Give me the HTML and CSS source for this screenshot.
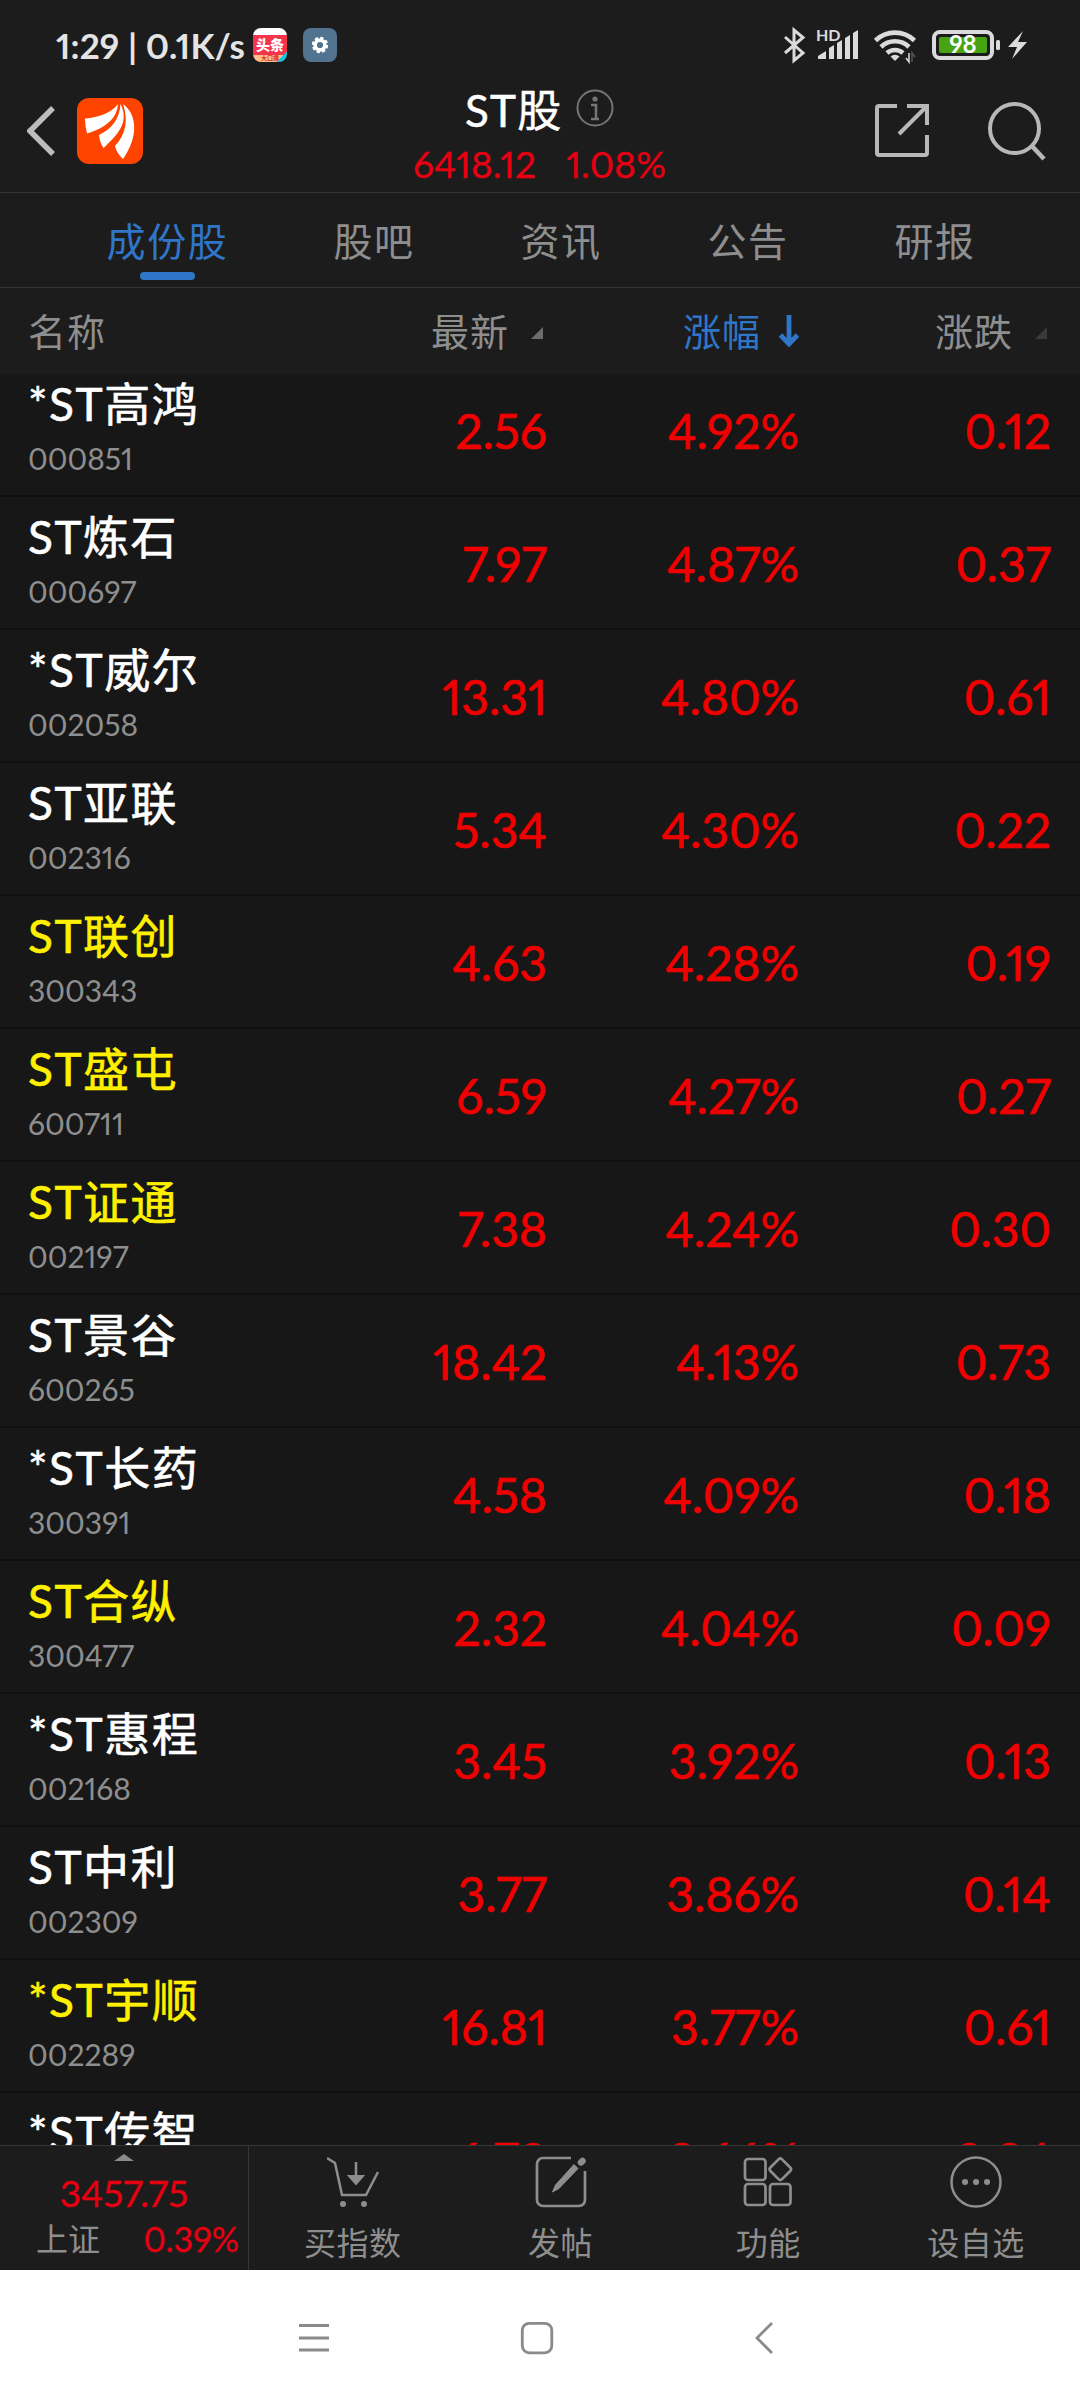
FILE: index.html
```html
<!DOCTYPE html>
<html lang="zh-CN">

<head>
    <meta charset="UTF-8">
    <meta name="viewport" content="width=device-width, initial-scale=1.0">
    <title>ST股</title>
    <link rel="stylesheet" href="styles.css">
</head>

<body>
    <div class="status-bar">
        <span class="status-time">1:29 | 0.1K/s</span>
        <div class="app-badge news">
            <span class="news-title">头条</span>
            <span class="news-foot">大口播</span>
        </div>
        <div class="app-badge gear">
            <svg width="34" height="34" viewBox="0 0 34 34">
                <circle cx="17" cy="17" r="4.9" fill="none" stroke="#fff" stroke-width="3.6"/>
                <circle cx="17" cy="17" r="7" fill="none" stroke="#fff" stroke-width="2.4" stroke-dasharray="3.3 2.2"/>
            </svg>
        </div>
        <svg class="status-icons" width="250" height="40" viewBox="780 25 250 40">
            <path d="M785 37l18 16-9 7.500V30l9 7.500-18 15.500" fill="none" stroke="#dcdadc" stroke-width="3"/>
            <text x="816" y="40.500" class="hd-text">HD</text>
            <path d="M818 59v-3l8-5v8zM829 59V48l5-3v14zM837 59V43l5-3v19zM845 59V38l5-3v24zM853 59V33l5-3v29z" fill="#dcdadc"/>
            <g fill="none" stroke="#dcdadc" stroke-width="4.600">
                <path d="M875.500 40.500a28 28 0 0 1 39 0"/>
                <path d="M881 47a20 20 0 0 1 28 0"/>
                <path d="M887 53a12 12 0 0 1 16 0"/>
            </g>
            <path d="M890.500 56.500a7 7 0 0 1 9 0l-4.500 4.500z" fill="#dcdadc"/>
            <path d="M909 53v9l-3-4" fill="none" stroke="#dcdadc" stroke-width="1.500"/>
            <path d="M912 62v-9l3 4" fill="none" stroke="#555" stroke-width="1.500"/>
            <rect x="934" y="32" width="58" height="26" rx="6" fill="none" stroke="#dcdadc" stroke-width="4"/>
            <rect x="939" y="37" width="48" height="16" rx="2" fill="#46a412"/>
            <text x="963" y="53" class="battery-text">98</text>
            <rect x="996" y="40" width="4" height="10" rx="1.500" fill="#dcdadc"/>
            <path d="M1023 31l-15 16h9l-5 12 15-17h-9z" fill="#dcdadc"/>
        </svg>
    </div>

    <div class="header">
        <svg class="back" width="30" height="52" viewBox="0 0 30 52">
            <path d="M26 3L3 26l23 23" fill="none" stroke="#bdbdbd" stroke-width="5.500"/>
        </svg>
        <svg class="logo" width="66" height="66" viewBox="0 0 66 66">
            <rect width="66" height="66" rx="12" fill="#ff4400"/>
            <path d="M8 20.500C22 19.500 34 15 41 6c-1 15-13 24-31 29.500q-2-7-2-15z" fill="#fff"/>
            <path d="M22 37C34 31 42.500 22 43.500 6c9 18-2 30-17 44q-4-6-4.500-13z" fill="#fff"/>
            <path d="M38 48C49 36 51.500 22 46 6c15 11 15 34 0 55q-6-5-8-13z" fill="#fff"/>
        </svg>
        <div class="header-center">
            <div class="title">
                <span>ST股</span>
                <svg width="38" height="38" viewBox="0 0 38 38">
                    <circle cx="19" cy="19" r="17.500" fill="none" stroke="#757575" stroke-width="2"/>
                    <circle cx="19" cy="10" r="2.600" fill="#757575"/>
                    <path d="M15 16h5v13M15 30h8" fill="none" stroke="#757575" stroke-width="2.500"/>
                </svg>
            </div>
            <div class="index-line"><span>6418.12</span><span>1.08%</span></div>
        </div>
        <svg class="share" width="56" height="56" viewBox="0 0 56 56">
            <path d="M23 4H5a2 2 0 0 0-2 2v45a2 2 0 0 0 2 2h46a2 2 0 0 0 2-2V33M33 4h20v19M53 4L25 32" fill="none" stroke="#b8b8b8" stroke-width="4"/>
        </svg>
        <svg class="search" width="60" height="60" viewBox="0 0 60 60">
            <circle cx="27.500" cy="27.500" r="24.500" fill="none" stroke="#b8b8b8" stroke-width="4"/>
            <path d="M44 44l13 14" stroke="#b8b8b8" stroke-width="4.500"/>
        </svg>
    </div>

    <div class="tabs">
        <div class="tab active">成份股</div>
        <div class="tab">股吧</div>
        <div class="tab">资讯</div>
        <div class="tab">公告</div>
        <div class="tab">研报</div>
    </div>

    <div class="table-head">
        <div class="head-name">名称</div>
        <div class="head-col">最新<svg class="corner" width="12" height="12" viewBox="0 0 12 12"><path d="M12 0v12H0z" fill="#6d6d6d"/></svg></div>
        <div class="head-col sorted">涨幅<svg class="arrow" width="20" height="32" viewBox="0 0 20 32"><path d="M10 0v29M1.500 20L10 29l8.500-9" fill="none" stroke="#2f76c9" stroke-width="4.800"/></svg></div>
        <div class="head-col">涨跌<svg class="corner" width="12" height="12" viewBox="0 0 12 12"><path d="M12 0v12H0z" fill="#3a3a3a"/></svg></div>
    </div>

    <div class="list">
        <div class="row">
            <div class="stock"><div class="name">*ST高鸿</div><div class="code">000851</div></div>
            <div class="num">2.56</div><div class="num">4.92%</div><div class="num">0.12</div>
        </div>
        <div class="row">
            <div class="stock"><div class="name">ST炼石</div><div class="code">000697</div></div>
            <div class="num">7.97</div><div class="num">4.87%</div><div class="num">0.37</div>
        </div>
        <div class="row">
            <div class="stock"><div class="name">*ST威尔</div><div class="code">002058</div></div>
            <div class="num">13.31</div><div class="num">4.80%</div><div class="num">0.61</div>
        </div>
        <div class="row">
            <div class="stock"><div class="name">ST亚联</div><div class="code">002316</div></div>
            <div class="num">5.34</div><div class="num">4.30%</div><div class="num">0.22</div>
        </div>
        <div class="row">
            <div class="stock"><div class="name own">ST联创</div><div class="code">300343</div></div>
            <div class="num">4.63</div><div class="num">4.28%</div><div class="num">0.19</div>
        </div>
        <div class="row">
            <div class="stock"><div class="name own">ST盛屯</div><div class="code">600711</div></div>
            <div class="num">6.59</div><div class="num">4.27%</div><div class="num">0.27</div>
        </div>
        <div class="row">
            <div class="stock"><div class="name own">ST证通</div><div class="code">002197</div></div>
            <div class="num">7.38</div><div class="num">4.24%</div><div class="num">0.30</div>
        </div>
        <div class="row">
            <div class="stock"><div class="name">ST景谷</div><div class="code">600265</div></div>
            <div class="num">18.42</div><div class="num">4.13%</div><div class="num">0.73</div>
        </div>
        <div class="row">
            <div class="stock"><div class="name">*ST长药</div><div class="code">300391</div></div>
            <div class="num">4.58</div><div class="num">4.09%</div><div class="num">0.18</div>
        </div>
        <div class="row">
            <div class="stock"><div class="name own">ST合纵</div><div class="code">300477</div></div>
            <div class="num">2.32</div><div class="num">4.04%</div><div class="num">0.09</div>
        </div>
        <div class="row">
            <div class="stock"><div class="name">*ST惠程</div><div class="code">002168</div></div>
            <div class="num">3.45</div><div class="num">3.92%</div><div class="num">0.13</div>
        </div>
        <div class="row">
            <div class="stock"><div class="name">ST中利</div><div class="code">002309</div></div>
            <div class="num">3.77</div><div class="num">3.86%</div><div class="num">0.14</div>
        </div>
        <div class="row">
            <div class="stock"><div class="name own">*ST宇顺</div><div class="code">002289</div></div>
            <div class="num">16.81</div><div class="num">3.77%</div><div class="num">0.61</div>
        </div>
        <div class="row">
            <div class="stock"><div class="name">*ST传智</div></div>
            <div class="num">6.78</div><div class="num">3.66%</div><div class="num">0.24</div>
        </div>
    </div>

    <div class="bottom-bar">
        <div class="market">
            <svg width="20" height="7" viewBox="0 0 20 7"><path d="M10 0l10 7H0z" fill="#8a8a8a"/></svg>
            <div class="market-value">3457.75</div>
            <div class="market-line"><span class="market-name">上证</span><span>0.39%</span></div>
        </div>
        <div class="action">
            <svg width="52" height="52" viewBox="0 0 52 52" fill="none" stroke="#8e8e8e" stroke-width="2.500">
                <path d="M0 2l8 5 7 32h24l12-23"/>
                <path d="M29 6v16"/>
                <path d="M22 20h14l-7 8zM14 48a2 2 0 1 0 4 0a2 2 0 1 0-4 0M35 48a2 2 0 1 0 4 0a2 2 0 1 0-4 0" fill="#8e8e8e" stroke-width="2"/>
            </svg>
            <span>买指数</span>
        </div>
        <div class="action">
            <svg width="52" height="52" viewBox="0 0 52 52" fill="none" stroke="#8e8e8e" stroke-width="2.700">
                <path d="M36 2H8a6 6 0 0 0-6 6v36a6 6 0 0 0 6 6h36a6 6 0 0 0 6-6V15"/>
                <path d="M39 8.500l4 4-19 20-6.500 3.500 3-7z" fill="#8e8e8e" stroke-width="1"/>
                <path d="M46 6.500l1.500-1.500" stroke-width="6.500" stroke-linecap="round"/>
            </svg>
            <span>发帖</span>
        </div>
        <div class="action">
            <svg width="52" height="52" viewBox="0 0 52 52" fill="none" stroke="#8e8e8e" stroke-width="2.700">
                <rect x="3" y="3" width="20.500" height="21" rx="3"/>
                <rect x="3" y="28" width="20.500" height="21" rx="3"/>
                <rect x="28" y="28" width="20.500" height="21" rx="3"/>
                <rect x="30" y="5" width="16.500" height="16.500" rx="2.500" transform="rotate(45 38.300 13.300)"/>
            </svg>
            <span>功能</span>
        </div>
        <div class="action">
            <svg width="52" height="52" viewBox="0 0 52 52" fill="none" stroke="#8e8e8e" stroke-width="2.500">
                <circle cx="26" cy="26" r="24.500"/>
                <path d="M15 26h.1M26 26h.1M37 26h.1" stroke-width="6" stroke-linecap="round"/>
            </svg>
            <span>设自选</span>
        </div>
    </div>

    <div class="nav-bar">
        <svg width="32" height="34" viewBox="0 0 32 34"><path d="M1 4.500h30M1 17h30M1 29h30" stroke="#8a8a8a" stroke-width="2.800"/></svg>
        <svg class="home" width="34" height="34" viewBox="0 0 34 34"><rect x="2.300" y="2.300" width="29.500" height="29.500" rx="7" fill="none" stroke="#8a8a8a" stroke-width="2.800"/></svg>
        <svg width="20" height="34" viewBox="0 0 20 34"><path d="M18 2L3 17l15 15" fill="none" stroke="#8a8a8a" stroke-width="2.800"/></svg>
    </div>
</body>

</html>
```

FILE: styles.css
```css
* {
    box-sizing: border-box;
}

body {
    margin: 0;
    width: 1080px;
    height: 2400px;
    overflow: hidden;
    display: flex;
    flex-direction: column;
    background-color: #1c1c1c;
    color: #8e8e8e;
    font-family: Lato, "Noto Sans CJK SC", sans-serif;
    font-variant-numeric: proportional-nums;
}

svg {
    display: block;
    flex: none;
}

.status-bar {
    height: 76px;
    padding: 14px 50px 0 56px;
    display: flex;
    align-items: center;
    flex: none;
}

.status-time {
    width: 197px;
    font-size: 35px;
    font-weight: bold;
    letter-spacing: 0.1px;
    color: #e4e4e4;
    white-space: nowrap;
}

.app-badge {
    width: 34px;
    height: 34px;
    border-radius: 8px;
    margin-right: 16px;
    overflow: hidden;
    flex: none;
}

.news {
    background: linear-gradient(135deg, transparent 84%, #19c5dc 84%), linear-gradient(#fff 0 20%, #f5344c 20% 78%, #ffc08a 78%);
    display: flex;
    flex-direction: column;
    align-items: center;
    padding-top: 7px;
}

.news-title {
    font-size: 14px;
    font-weight: 900;
    line-height: 19px;
    color: #fff;
}

.news-foot {
    font-size: 6px;
    font-weight: bold;
    line-height: 7px;
    color: #d8351c;
}

.gear {
    background-color: #52738f;
}

.status-icons {
    margin-left: auto;
}

.hd-text {
    font-size: 16px;
    font-weight: bold;
    fill: #dcdadc;
}

.battery-text {
    font-size: 24px;
    font-weight: bold;
    fill: #fff;
    text-anchor: middle;
}

.header {
    height: 117px;
    border-bottom: 1px solid #333;
    display: flex;
    flex: none;
    padding-left: 27px;
}

.back {
    margin-top: 29px;
}

.logo {
    margin: 22px 0 0 20px;
}

.header-center {
    width: 260px;
    margin: 4px 0 0 267px;
    display: flex;
    flex-direction: column;
}

.title {
    display: flex;
    align-items: center;
    gap: 14px;
    height: 56px;
    padding-left: 55px;
    font-size: 44px;
    letter-spacing: 1.2px;
    -webkit-text-stroke: 0.5px;
    color: #fff;
}

.index-line {
    display: flex;
    justify-content: space-between;
    width: 253px;
    margin: 6px 0 0 3px;
    font-size: 37px;
    line-height: 44px;
    letter-spacing: 0.2px;
    -webkit-text-stroke: 0.3px;
    color: #e60012;
}

.share {
    margin: 26px 0 0 204px;
}

.search {
    margin: 25px 0 0 57px;
}

.tabs {
    height: 95px;
    border-bottom: 1px solid #333;
    display: flex;
    justify-content: center;
    flex: none;
    padding-left: 3px;
}

.tab {
    width: 187px;
    display: flex;
    flex-direction: column;
    align-items: center;
    padding-top: 20px;
    font-size: 39px;
    line-height: 56px;
    letter-spacing: 1.6px;
}

.tab.active {
    width: 226px;
    color: #2f76c9;
}

.tab.active::after {
    content: "";
    width: 55px;
    height: 8px;
    margin-top: 3px;
    border-radius: 4px;
    background-color: #2f76c9;
}

.table-head,
.row {
    display: grid;
    grid-template-columns: 267px 252px 252px 252px;
    padding-left: 28px;
    flex: none;
}

.table-head {
    height: 86px;
    font-size: 38px;
    line-height: 86px;
    letter-spacing: 1px;
}

.head-col {
    display: flex;
    align-items: center;
    justify-content: flex-end;
}

.corner {
    margin: 4px 4px 0 22px;
}

.arrow {
    margin: 0 0 0 18px;
}

.sorted {
    color: #2f76c9;
}

.list {
    flex: 1;
    min-height: 0;
    overflow: hidden;
    background-color: #171717;
    display: flex;
    flex-direction: column;
}

.row {
    height: 133px;
    border-bottom: 2px solid #101010;
}

/* list is scrolled a little, first row is cut at the top */
.row:first-child {
    margin-top: -10px;
}

.name {
    margin-top: 12px;
    font-size: 46px;
    line-height: 56px;
    letter-spacing: 1.5px;
    color: #fff;
    -webkit-text-stroke: 0.6px;
    white-space: nowrap;
}

.own {
    color: #fff000;
}

.code {
    font-size: 30px;
    line-height: 36px;
    margin-top: 8px;
}

.num {
    text-align: right;
    font-size: 48px;
    line-height: 133px;
    -webkit-text-stroke: 0.6px;
    color: #f00000;
}

.bottom-bar {
    height: 125px;
    border-top: 1px solid #363636;
    display: flex;
    flex: none;
}

.market {
    width: 249px;
    border-right: 1px solid #363636;
    display: flex;
    flex-direction: column;
    align-items: center;
    padding-top: 8px;
    color: #e60012;
    -webkit-text-stroke: 0.3px;
}

.market-value {
    font-size: 37px;
    line-height: 44px;
    margin-top: 10px;
}

.market-line {
    width: 100%;
    display: flex;
    justify-content: space-between;
    padding: 0 9px 0 36px;
    font-size: 34px;
    line-height: 48px;
}

.market-name {
    font-size: 32px;
    color: #8e8e8e;
    -webkit-text-stroke: 0;
}

.action {
    flex: 1;
    display: flex;
    flex-direction: column;
    align-items: center;
    padding-top: 10px;
    font-size: 32px;
    line-height: 48px;
    letter-spacing: 0.5px;
}

.action span {
    margin-top: 11px;
}

.nav-bar {
    height: 130px;
    background-color: #fff;
    display: flex;
    align-items: center;
    flex: none;
    padding: 6px 0 0 298px;
}

.home {
    margin: 0 200px 0 190px;
}
```
